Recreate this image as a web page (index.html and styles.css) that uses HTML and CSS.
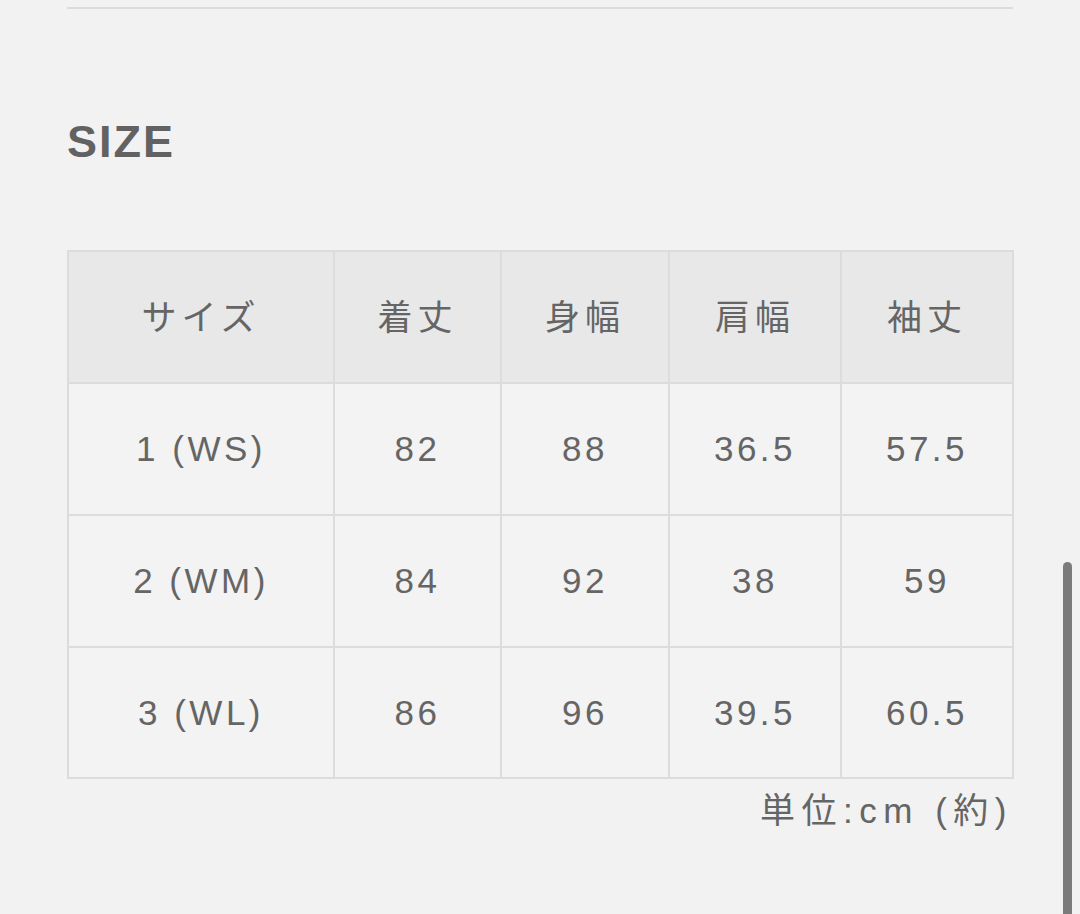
FILE: index.html
```html
<!DOCTYPE html>
<html lang="ja">
<head>
<meta charset="utf-8">
<title>SIZE</title>
<link rel="stylesheet" href="styles.css">
</head>
<body>
<main class="page">
  <hr class="divider">
  <h2 class="title">SIZE</h2>
  <table class="size-table">
    <colgroup>
      <col class="c1"><col class="c2"><col class="c3"><col class="c4"><col class="c5">
    </colgroup>
    <thead>
      <tr><th>サイズ</th><th>着丈</th><th>身幅</th><th>肩幅</th><th>袖丈</th></tr>
    </thead>
    <tbody>
      <tr><td>1 (WS)</td><td>82</td><td>88</td><td>36.5</td><td>57.5</td></tr>
      <tr><td>2 (WM)</td><td>84</td><td>92</td><td>38</td><td>59</td></tr>
      <tr><td>3 (WL)</td><td>86</td><td>96</td><td>39.5</td><td>60.5</td></tr>
    </tbody>
  </table>
  <p class="note">単位:cm (約)</p>
</main>
<div class="scrollbar"></div>
</body>
</html>
```
FILE: styles.css
```css
html, body {
  margin: 0;
  padding: 0;
  background: #f2f2f2;
  height: 100%;
  overflow: hidden;
}
body {
  font-family: "Liberation Sans", "Noto Sans CJK JP", sans-serif;
  color: #656565;
}
.page {
  padding: 7px 67px 0 67px;
}
.divider {
  margin: 0;
  border: 0;
  height: 2px;
  background: #dcdcdc;
}
.title {
  margin: 110px 0 0 0;
  font-size: 45px;
  line-height: 45px;
  font-weight: 700;
  letter-spacing: 2px;
  color: #626262;
}
.size-table {
  margin-top: 86px;
  width: 945px;
  border-collapse: collapse;
  table-layout: fixed;
}
.c1 { width: 266px; }
.c2 { width: 167px; }
.c3 { width: 168px; }
.c4 { width: 172px; }
.c5 { width: 172px; }
.size-table th,
.size-table td {
  border: 2px solid #dcdcdc;
  height: 130px;
  padding: 0;
  text-align: center;
  vertical-align: middle;
  font-size: 35px;
  letter-spacing: 3.5px;
  font-weight: 400;
  color: #656565;
}
.size-table th {
  background: #e8e8e8;
  font-family: "Noto Sans CJK JP", "Liberation Sans", sans-serif;
  letter-spacing: 5px;
  padding: 0 0 6px 0;
  height: 124px;
}
.size-table tbody tr:last-child td {
  height: 129px;
}
.size-table td {
  background: #f3f3f3;
}
.note {
  margin: 10px 0 0 0;
  text-align: right;
  font-size: 35px;
  line-height: 44px;
  letter-spacing: 6.5px;
  padding-right: 0;
}
.scrollbar {
  position: fixed;
  left: 1063px;
  top: 562px;
  width: 9px;
  height: 360px;
  background: #7b7b7b;
  border-radius: 4.5px;
}
```
